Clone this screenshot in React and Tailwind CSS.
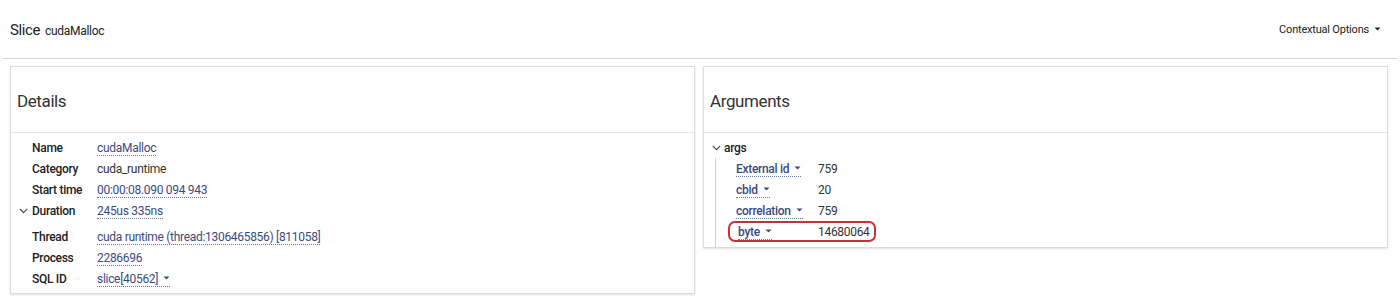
import React from "react";

const Caret = () => (
  <svg width="7" height="4" viewBox="0 0 7 4" className="inline-block ml-[5px] mb-[2px]">
    <path d="M0.5 0.5 L3.5 3.5 L6.5 0.5 Z" fill="currentColor" />
  </svg>
);

const Chevron = () => (
  <svg width="9" height="6" viewBox="0 0 9 6" className="inline-block">
    <path d="M0.8 0.8 L4.5 4.6 L8.2 0.8" fill="none" stroke="#444" strokeWidth="1.1" />
  </svg>
);

const Link = ({ children, caret }) => (
  <span className="text-[#3c4a7e] border-b border-dotted border-[#6b7699] leading-[14px]">
    {children}
    {caret && <Caret />}
  </span>
);

const Row = ({ label, children, chevron, className = "" }) => (
  <div className={`flex items-center h-[21px] ${className}`}>
    <div className="w-[21px] flex items-center justify-start pl-[8px]">{chevron && <Chevron />}</div>
    <div className="w-[65px] font-medium text-[#222]">{label}</div>
    <div className="text-[#333]">{children}</div>
  </div>
);

export default function App() {
  return (
    <div className="w-[1400px] h-[307px] bg-white text-[12px] tracking-[-0.3px] text-[#222]" style={{ fontFamily: "Roboto, 'Liberation Sans', sans-serif" }}>
      <div className="h-[59px] mx-[3px] border-b border-[#d6d6d6] flex items-center justify-between pl-[7px] pr-[16px]">
        <div className="flex items-baseline gap-[5px] mt-[2px]">
          <span className="text-[15px] tracking-[-0.4px] text-[#222]">Slice</span>
          <span className="text-[12px] text-[#222]">cudaMalloc</span>
        </div>
        <div className="text-[11px] tracking-[-0.2px] text-[#222] mt-[2px]">
          Contextual Options
          <Caret />
        </div>
      </div>
      <div className="flex items-start gap-[8px] pl-[10px] pt-[7px]">
        <div className="w-[685px] h-[228px] border border-[#dcdcdc] shadow-[0_1px_2px_rgba(0,0,0,0.12)]">
          <div className="h-[66px] border-b border-[#e6e6e6] flex items-center pl-[6px] pt-[4px]">
            <span className="text-[17px] tracking-[-0.4px] text-[#333]">Details</span>
          </div>
          <div className="pt-[4px]">
            <Row label="Name"><Link>cudaMalloc</Link></Row>
            <Row label="Category">cuda_runtime</Row>
            <Row label="Start time"><Link>00:00:08.090 094 943</Link></Row>
            <Row label="Duration" chevron><Link>245us 335ns</Link></Row>
            <Row label="Thread" className="mt-[5px]"><Link>cuda runtime (thread:1306465856) [811058]</Link></Row>
            <Row label="Process"><Link>2286696</Link></Row>
            <Row label="SQL ID"><Link caret>slice[40562]</Link></Row>
          </div>
        </div>
        <div className="w-[685px] h-[182px] border border-[#dcdcdc] shadow-[0_1px_2px_rgba(0,0,0,0.12)]">
          <div className="h-[66px] border-b border-[#e6e6e6] flex items-center pl-[6px] pt-[4px]">
            <span className="text-[17px] tracking-[-0.4px] text-[#333]">Arguments</span>
          </div>
          <div className="pt-[4px]">
            <div className="flex items-center h-[21px] pl-[8px]">
              <Chevron />
              <span className="ml-[3px] font-medium text-[#222]">args</span>
            </div>
            <div className="ml-[11px] border-l border-[#cfcfcf] pl-[20px] pb-[6px]">
              {[
                ["External id", "759"],
                ["cbid", "20"],
                ["correlation", "759"],
              ].map(([k, v]) => (
                <div key={k} className="flex items-center h-[21px]">
                  <div className="w-[82px] font-medium"><Link caret>{k}</Link></div>
                  <div className="text-[#333]">{v}</div>
                </div>
              ))}
              <div className="flex items-center h-[21px] -ml-[8px] pl-[8px] w-[148px] border-[2px] border-[#c8323a] rounded-[7px]">
                <div className="w-[80px] font-medium"><Link caret>byte</Link></div>
                <div className="text-[#333]">14680064</div>
              </div>
            </div>
          </div>
        </div>
      </div>
    </div>
  );
}
